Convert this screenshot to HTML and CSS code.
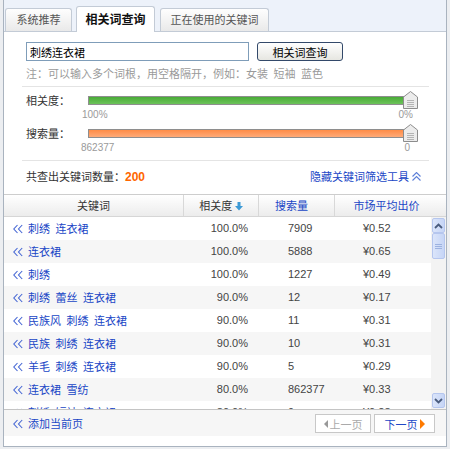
FILE: index.html
```html
<!DOCTYPE html>
<html lang="zh-CN">
<head>
    <meta charset="UTF-8">
    <title>相关词查询</title>
    <link rel="stylesheet" href="styles.css">
</head>
<body>
    <div class="frame">
        <div class="tabs">
            <a class="tab tab-1">系统推荐</a>
            <a class="tab tab-2 active">相关词查询</a>
            <a class="tab tab-3">正在使用的关键词</a>
        </div>

        <div class="filter">
            <div class="search">
                <input class="search-input" type="text" value="刺绣连衣裙">
                <button class="search-btn">相关词查询</button>
            </div>
            <p class="hint">注：可以输入多个词根，用空格隔开，例如：女装 短袖 蓝色</p>
            <div class="rule"></div>

            <div class="slider">
                <span class="slider-label">相关度：</span>
                <div class="track">
                    <div class="bar bar-green"></div>
                    <svg class="knob" width="15" height="18" viewBox="0 0 15 18">
                        <polygon points="0.5,6 7.5,0.5 14.5,6 14.5,17.5 0.5,17.5" fill="#ececec" stroke="#8c8c8c"/>
                        <path d="M4 9.5h7M4 11.5h7M4 13.5h7M4 15.5h7" stroke="#b4b4b4"/>
                    </svg>
                </div>
            </div>
            <div class="slider-values"><span>100%</span><span>0%</span></div>

            <div class="slider slider-2">
                <span class="slider-label">搜索量：</span>
                <div class="track">
                    <div class="bar bar-orange"></div>
                    <svg class="knob" width="15" height="18" viewBox="0 0 15 18">
                        <polygon points="0.5,6 7.5,0.5 14.5,6 14.5,17.5 0.5,17.5" fill="#ececec" stroke="#8c8c8c"/>
                        <path d="M4 9.5h7M4 11.5h7M4 13.5h7M4 15.5h7" stroke="#b4b4b4"/>
                    </svg>
                </div>
            </div>
            <div class="slider-values values-2"><span>862377</span><span>0</span></div>
            <div class="rule"></div>

            <div class="summary">
                <span>共查出关键词数量：<b class="count">200</b></span>
                <a class="toggle">隐藏关键词筛选工具
                    <svg width="9" height="9" viewBox="0 0 9 9"><path d="M0.5 4.5l4-4 4 4M0.5 8.5l4-4 4 4" fill="none" stroke="#5d7fd8" stroke-width="1.1"/></svg>
                </a>
            </div>
        </div>

        <div class="grid-head">
            <div class="th th-kw">关键词</div>
            <div class="th th-rel">相关度 <svg width="8" height="9" viewBox="0 0 8 9"><path d="M2.5 0h3v4h2.5L4 8.5 0 4h2.5z" fill="#3c9ad6"/></svg></div>
            <div class="th th-sv">搜索量</div>
            <div class="th th-price">市场平均出价</div>
        </div>

        <div class="grid-body">
            <div class="rows">
                <div class="row">
                    <div class="td-kw"><svg class="dbl" width="10" height="10" viewBox="0 0 10 10"><path d="M4.5 1L0.8 5l3.7 4M9.2 1L5.5 5l3.7 4" fill="none" stroke="#4566d4" stroke-width="1.1"/></svg>刺绣 连衣裙</div>
                    <div class="td-rel">100.0%</div><div class="td-sv">7909</div><div class="td-price">¥0.52</div>
                </div>
                <div class="row">
                    <div class="td-kw"><svg class="dbl" width="10" height="10" viewBox="0 0 10 10"><path d="M4.5 1L0.8 5l3.7 4M9.2 1L5.5 5l3.7 4" fill="none" stroke="#4566d4" stroke-width="1.1"/></svg>连衣裙</div>
                    <div class="td-rel">100.0%</div><div class="td-sv">5888</div><div class="td-price">¥0.65</div>
                </div>
                <div class="row">
                    <div class="td-kw"><svg class="dbl" width="10" height="10" viewBox="0 0 10 10"><path d="M4.5 1L0.8 5l3.7 4M9.2 1L5.5 5l3.7 4" fill="none" stroke="#4566d4" stroke-width="1.1"/></svg>刺绣</div>
                    <div class="td-rel">100.0%</div><div class="td-sv">1227</div><div class="td-price">¥0.49</div>
                </div>
                <div class="row">
                    <div class="td-kw"><svg class="dbl" width="10" height="10" viewBox="0 0 10 10"><path d="M4.5 1L0.8 5l3.7 4M9.2 1L5.5 5l3.7 4" fill="none" stroke="#4566d4" stroke-width="1.1"/></svg>刺绣 蕾丝 连衣裙</div>
                    <div class="td-rel">90.0%</div><div class="td-sv">12</div><div class="td-price">¥0.17</div>
                </div>
                <div class="row">
                    <div class="td-kw"><svg class="dbl" width="10" height="10" viewBox="0 0 10 10"><path d="M4.5 1L0.8 5l3.7 4M9.2 1L5.5 5l3.7 4" fill="none" stroke="#4566d4" stroke-width="1.1"/></svg>民族风 刺绣 连衣裙</div>
                    <div class="td-rel">90.0%</div><div class="td-sv">11</div><div class="td-price">¥0.31</div>
                </div>
                <div class="row">
                    <div class="td-kw"><svg class="dbl" width="10" height="10" viewBox="0 0 10 10"><path d="M4.5 1L0.8 5l3.7 4M9.2 1L5.5 5l3.7 4" fill="none" stroke="#4566d4" stroke-width="1.1"/></svg>民族 刺绣 连衣裙</div>
                    <div class="td-rel">90.0%</div><div class="td-sv">10</div><div class="td-price">¥0.31</div>
                </div>
                <div class="row">
                    <div class="td-kw"><svg class="dbl" width="10" height="10" viewBox="0 0 10 10"><path d="M4.5 1L0.8 5l3.7 4M9.2 1L5.5 5l3.7 4" fill="none" stroke="#4566d4" stroke-width="1.1"/></svg>羊毛 刺绣 连衣裙</div>
                    <div class="td-rel">90.0%</div><div class="td-sv">5</div><div class="td-price">¥0.29</div>
                </div>
                <div class="row">
                    <div class="td-kw"><svg class="dbl" width="10" height="10" viewBox="0 0 10 10"><path d="M4.5 1L0.8 5l3.7 4M9.2 1L5.5 5l3.7 4" fill="none" stroke="#4566d4" stroke-width="1.1"/></svg>连衣裙 雪纺</div>
                    <div class="td-rel">80.0%</div><div class="td-sv">862377</div><div class="td-price">¥0.33</div>
                </div>
                <div class="row">
                    <div class="td-kw"><svg class="dbl" width="10" height="10" viewBox="0 0 10 10"><path d="M4.5 1L0.8 5l3.7 4M9.2 1L5.5 5l3.7 4" fill="none" stroke="#4566d4" stroke-width="1.1"/></svg>刺绣 短袖 连衣裙</div>
                    <div class="td-rel">80.0%</div><div class="td-sv">9</div><div class="td-price">¥0.28</div>
                </div>
            </div>
            <div class="scrollbar">
                <div class="sb-btn"><svg width="9" height="6" viewBox="0 0 9 6"><path d="M1 5l3.5-3.5L8 5" fill="none" stroke="#4a5c7e" stroke-width="1.8"/></svg></div>
                <div class="sb-thumb"><svg width="7" height="7" viewBox="0 0 7 7"><path d="M0 1.5h7M0 3.5h7M0 5.5h7" stroke="#9cb2e0"/></svg></div>
                <div class="sb-space"></div>
                <div class="sb-btn"><svg width="9" height="6" viewBox="0 0 9 6"><path d="M1 1l3.5 3.5L8 1" fill="none" stroke="#4a5c7e" stroke-width="1.8"/></svg></div>
            </div>
        </div>

        <div class="footer">
            <a class="add"><svg width="10" height="10" viewBox="0 0 10 10"><path d="M4.5 1L0.8 5l3.7 4M9.2 1L5.5 5l3.7 4" fill="none" stroke="#4566d4" stroke-width="1.1"/></svg>添加当前页</a>
            <div class="pager">
                <a class="page-btn prev"><span class="tri-left"></span>上一页</a>
                <a class="page-btn next">下一页<span class="tri-right"></span></a>
            </div>
        </div>
    </div>
</body>
</html>
```

FILE: styles.css
```css
* {
    box-sizing: border-box;
}
body {
    margin: 0;
    background: #eceef1;
    font-family: "Noto Sans CJK SC", "Liberation Sans", sans-serif;
    font-size: 11px;
    color: #333;
}
a {
    cursor: pointer;
}
.frame {
    margin-left: 3px;
    width: 444px;
    height: 447px;
    border: 1px solid #a9b3bf;
    border-top: 0;
    background: #fff;
}

/* tabs */
.tabs {
    display: flex;
    align-items: flex-end;
    height: 32px;
    padding-left: 1px;
    background: #edf2fa;
    border-bottom: 1px solid #c3cbd6;
}
.tab {
    height: 23px;
    line-height: 21px;
    margin-right: 4px;
    border: 1px solid #c3cbd6;
    border-bottom: 0;
    border-radius: 3px 3px 0 0;
    background: linear-gradient(#fefefe, #e9e9e9);
    color: #555;
    text-align: center;
}
.tab-1 { width: 67px; }
.tab-2 { width: 79px; margin-right: 5px; }
.tab-3 { width: 109px; }
.tab.active {
    height: 26px;
    line-height: 24px;
    margin-bottom: -1px;
    background: #fff;
    color: #111;
    font-size: 12px;
    font-weight: bold;
}

/* filter */
.filter {
    padding: 10px 17px 10px 18px;
}
.search {
    display: flex;
    height: 19px;
    padding-left: 4px;
}
.search-input {
    width: 223px;
    height: 19px;
    margin: 0;
    padding: 0 3px;
    border: 1px solid #7f9db9;
    font-family: inherit;
    font-size: 11px;
    color: #000;
    outline: none;
}
.search-btn {
    width: 86px;
    height: 19px;
    margin-left: 8px;
    padding: 0;
    border: 1px solid #33496a;
    border-radius: 3px;
    background: linear-gradient(#ffffff, #e6e6e1);
    font-family: inherit;
    font-size: 11px;
    color: #000;
    line-height: 16px;
}
.hint {
    margin: 5px 0 0;
    padding-left: 4px;
    line-height: 14px;
    color: #9a9a9a;
    word-spacing: 3px;
}
.rule {
    height: 1px;
    margin-top: 6px;
    background: #e4e4e4;
}
.slider {
    display: flex;
    align-items: center;
    height: 18px;
    margin-top: 4px;
    padding-left: 4px;
}
.slider-2 {
    margin-top: 3px;
}
.slider-label {
    width: 62px;
}
.track {
    position: relative;
    width: 330px;
    height: 18px;
}
.bar {
    height: 9px;
    margin-top: 5px;
    margin-right: 6px;
    border: 1px solid #8e8e8e;
}
.bar-green {
    background: linear-gradient(#49ab37, #6cc35a);
}
.bar-orange {
    background: linear-gradient(#ff8c46, #ffaa78);
}
.knob {
    position: absolute;
    right: 0;
    top: 0;
}
.slider-values {
    display: flex;
    justify-content: space-between;
    width: 331px;
    height: 12px;
    margin-left: 60px;
    font-family: "Liberation Sans", sans-serif;
    font-size: 10px;
    line-height: 12px;
    color: #9a9a9a;
}
.values-2 {
    width: 329px;
    margin-left: 59px;
}
.summary {
    display: flex;
    justify-content: space-between;
    align-items: center;
    height: 16px;
    margin-top: 7px;
    padding: 0 8px 0 4px;
}
.count {
    font-family: "Liberation Sans", sans-serif;
    font-size: 12px;
    color: #ff6600;
}
.toggle {
    display: flex;
    align-items: center;
    gap: 3px;
    color: #2046c6;
}

/* grid */
.grid-head {
    display: flex;
    height: 23px;
    border-top: 1px solid #cdcdcd;
    border-bottom: 1px solid #d6d6d6;
    background: linear-gradient(#ffffff, #ececec);
}
.th {
    line-height: 21px;
    text-align: center;
    border-left: 1px solid #d8d8d8;
}
.th-kw {
    width: 179px;
    border-left: 0;
}
.th-rel {
    width: 75px;
}
.th-rel svg {
    vertical-align: -1px;
}
.th-sv {
    width: 76px;
    padding-right: 10px;
    color: #2046c6;
}
.th-price {
    flex: 1;
    padding-right: 8px;
    color: #2046c6;
}
.grid-body {
    display: flex;
    height: 192px;
}
.rows {
    width: 427px;
    overflow: hidden;
}
.row {
    display: flex;
    height: 23px;
    line-height: 23px;
}
.row:nth-child(even) {
    background: #f6f6f6;
}
.td-kw {
    display: flex;
    align-items: center;
    gap: 5px;
    width: 179px;
    padding-left: 9px;
    color: #2046c6;
    word-spacing: 3px;
}
.td-rel, .td-sv, .td-price {
    font-family: "Liberation Sans", sans-serif;
    font-size: 11px;
    color: #444;
}
.td-rel {
    width: 75px;
    padding-right: 10px;
    text-align: right;
}
.td-sv {
    width: 76px;
    padding-left: 30px;
}
.td-price {
    flex: 1;
    padding-left: 29px;
}
.scrollbar {
    display: flex;
    flex-direction: column;
    flex: 1;
    padding: 1px;
    background: #f3f3f3;
}
.sb-btn, .sb-thumb {
    display: flex;
    align-items: center;
    justify-content: center;
    border: 1px solid #b5c6ee;
    border-radius: 2px;
    background: linear-gradient(90deg, #dbe5fa, #c6d5f6);
}
.sb-btn {
    height: 15px;
}
.sb-thumb {
    height: 26px;
}
.sb-space {
    flex: 1;
}

/* footer */
.footer {
    display: flex;
    justify-content: space-between;
    align-items: flex-start;
    height: 37px;
    padding: 4px 11px 0 9px;
    border-top: 1px solid #c4c4c4;
    background: linear-gradient(#f6f6f6 26px, #fff 26px);
}
.add {
    display: flex;
    align-items: center;
    gap: 5px;
    line-height: 19px;
    color: #2046c6;
}
.pager {
    display: flex;
    gap: 3px;
}
.page-btn {
    display: flex;
    align-items: center;
    justify-content: center;
    gap: 2px;
    height: 19px;
    border: 1px solid #c8c8c8;
    background: #fff;
}
.prev {
    width: 56px;
    color: #aaa;
}
.next {
    width: 61px;
    color: #2046c6;
}
.tri-left {
    border-right: 4px solid #999;
    border-top: 4px solid transparent;
    border-bottom: 4px solid transparent;
}
.tri-right {
    border-left: 5px solid #ff7a00;
    border-top: 5px solid transparent;
    border-bottom: 5px solid transparent;
}
```
